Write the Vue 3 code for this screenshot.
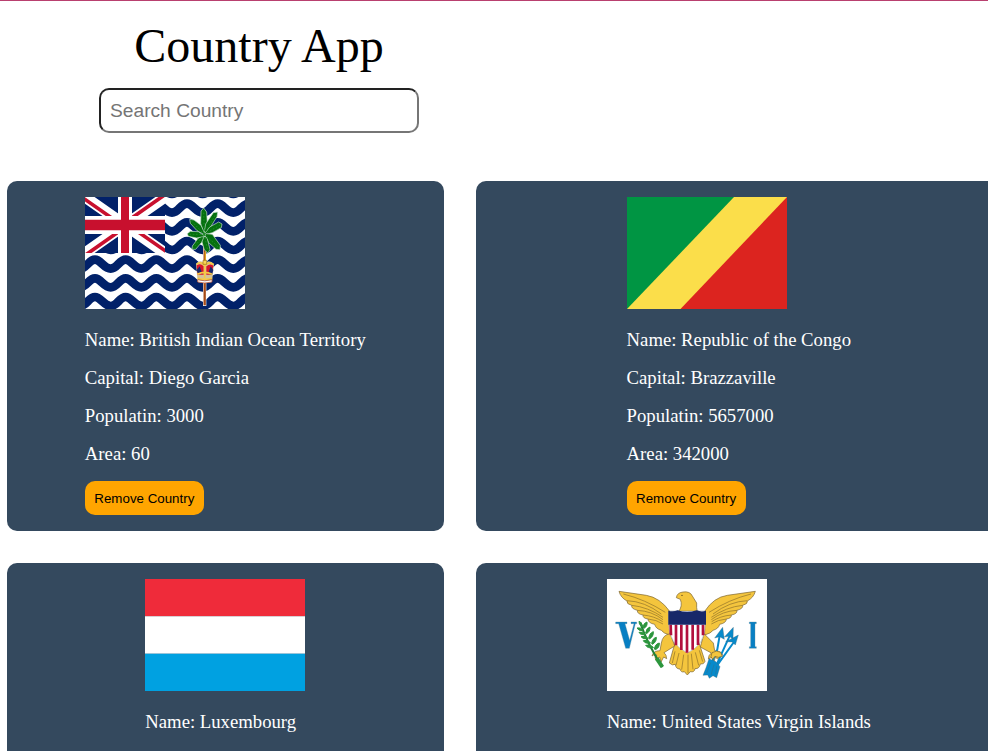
<script setup>
import { ref } from 'vue'

const search = ref('')
const countries = ref([
  { flag: 'io', name: 'British Indian Ocean Territory', capital: 'Diego Garcia', population: 3000, area: 60 },
  { flag: 'cg', name: 'Republic of the Congo', capital: 'Brazzaville', population: 5657000, area: 342000 },
  { flag: 'lu', name: 'Luxembourg' },
  { flag: 'vi', name: 'United States Virgin Islands' },
])

function remove(country) {
  countries.value = countries.value.filter((c) => c !== country)
}

// One horizontal wave: crests every 92 units, 27 units high.
function wave(y) {
  let d = `M-47 ${y}`
  for (let x = -47; x < 500; x += 92) {
    d += `C${x + 17} ${y} ${x + 27} ${y + 27} ${x + 47} ${y + 27}S${x + 73} ${y} ${x + 92} ${y}`
  }
  return d
}
const waves = [-15, 41, 97, 153, 209, 265, 321].map(wave)
</script>

<template>
  <main class="page">
    <header class="header">
      <h1 class="title">Country App</h1>
      <input v-model="search" class="search" type="text" placeholder="Search Country" />
    </header>
    <section class="grid">
      <article v-for="c in countries" :key="c.flag" class="card">
        <div class="content">
          <svg v-if="c.flag === 'io'" class="flag" viewBox="15 21 480 336">
            <path fill="#fff" d="M15 21h480v336H15z" />
            <g fill="none" stroke="#012169" stroke-width="26">
              <path v-for="(d, i) in waves" :key="i" :d="d" />
            </g>
            <svg x="15" y="21" width="240" height="168" viewBox="0 0 240 168">
              <path fill="#012169" d="M0 0h240v168H0z" />
              <path stroke="#fff" stroke-width="33" d="M0 0l240 168M240 0L0 168" />
              <path fill="none" stroke="#c8102e" stroke-width="11" d="M-3 5l123 86M243 163L120 77M237-5L120 77M3 173l117-82" />
              <path stroke="#fff" stroke-width="42" d="M120 0v168" />
              <path stroke="#fff" stroke-width="54" d="M0 84h240" />
              <path stroke="#c8102e" stroke-width="24" d="M120 0v168" />
              <path stroke="#c8102e" stroke-width="32" d="M0 84h240" />
            </svg>
            <path fill="none" stroke="#fff" stroke-width="10" d="M374 164v184" />
            <path fill="none" stroke="#a64b16" stroke-width="7" d="M374 168v178" />
            <path stroke="#e2a51f" stroke-width="4" d="M376 185v38" />
            <g fill="#05700f" stroke="#c9dfd2" stroke-width="2" stroke-linejoin="round">
              <path d="M373 135L362 100 363 63 371 54 380 66 382 100z" />
              <path d="M371 135L377 102 400 68 413 66 411 80 391 112z" />
              <path d="M371 135L389 111 416 96 426 102 424 113 397 128z" />
              <path d="M371 130L397 133 421 166 420 179 408 178 386 158z" />
              <path d="M368 132L382 146 390 178 384 189 373 180 365 152z" />
              <path d="M376 131L365 157 347 178 336 178 337 168 354 145z" />
              <path d="M375 139L350 144 325 139 322 131 331 124 355 125z" />
              <path d="M377 136L351 122 331 100 329 88 342 90 363 106z" />
            </g>
            <path fill="none" stroke="#1d8b25" stroke-width="3" stroke-dasharray="5 5" d="M373 133L371 62M373 133l34-60M373 133l47-28M373 133l43 39M373 133l10 48M373 133l-33 41M373 133h-44M373 133l-38-39" />
            <path fill="#d4c39a" d="M348 221q12-13 26-2 14-12 28 3l-6 54q-23 7-43 0z" />
            <path fill="#d8152a" d="M350 226q11-8 21 3v25h-18zM379 229q11-10 21-2l-5 27h-16z" />
            <path fill="#1b2a6b" d="M350 240l9-11 8 22h-13zM384 251l8-22 8 11-4 14z" />
            <path fill="none" stroke="#f6c942" stroke-width="5" d="M350 223q13-11 24 4 13-15 27-3M374 221v43M352 253q22-12 44 0M353 265q21 6 43 0" />
            <path fill="#fff" stroke="#a43b24" stroke-width="2" d="M353 269q21 7 43 0v7q-22 6-43 0z" />
            <path fill="#f8d657" stroke="#9c711a" stroke-width="2" d="M369 211h11v12h-11z" />
          </svg>
          <svg v-else-if="c.flag === 'cg'" class="flag" viewBox="0 0 160 112">
            <path fill="#009543" d="M0 0h160v112H0z" />
            <path fill="#fbde4a" d="M0 112L107 0h53v112z" />
            <path fill="#dc241f" d="M53.5 112L160 0v112z" />
          </svg>
          <svg v-else-if="c.flag === 'lu'" class="flag" viewBox="0 0 160 112">
            <path fill="#ef2b3a" d="M0 0h160v37.3H0z" />
            <path fill="#fff" d="M0 37.3h160v37.4H0z" />
            <path fill="#00a1e1" d="M0 74.7h160V112H0z" />
          </svg>
          <svg v-else class="flag" viewBox="21 27 480 336">
            <path fill="#fff" d="M21 27h480v336H21z" />
            <g fill="#f4c53d" stroke="#756032" stroke-width="2" stroke-linejoin="round">
              <path d="M209 124Q180 83 139 76L57 64q5 19 24 29-2 9 14 13-2 10 17 15-1 11 17 14-1 10 15 12 0 12 20 16 3 13 20 18 6 9 25 14z" />
              <path d="M314 124q27-42 68-48l84-12q-5 19-24 29 2 9-14 13 2 10-17 15 1 11-17 14 1 10-15 12 0 12-20 16-3 13-20 18-6 9-25 14z" />
              <path d="M235 126q14-18 6-38l-12-5q2-15 20-17 21-3 28 12l13 21q-1 14 2 27z" />
              <path d="M225 218l-17 61q10 9 18 4 1 14 14 14 3 12 13 8l9 10 9-10q12 3 14-9 13 1 16-14 11 2 14-8l-18-56z" />
              <path d="M211 191q-23 3-27 28l-4 23q-20 0-24 16 7-8 15-3-9 6-4 15l12-9 4 15 8-15 9 5q0-12-8-18l32-20zM312 191l28 28 4 23q20 0 24 14-8-6-14-1 8 8 5 16l-13-9-4 13-7-13-10 5q0-12 9-18l-33-18z" />
            </g>
            <path fill="#fff" stroke="#555a6a" d="M206 123h110v38q1 63-54 88-57-29-56-88z" />
            <path fill="none" stroke="#8b6e28" stroke-width="2" d="M70 72q65 16 126 55M81 92q53 2 103 40M95 106q49 5 94 36M112 121q43 2 77 28M129 135q34 3 59 20M144 147q25 2 45 15M453 72q-65 16-126 55M442 92q-53 2-103 40M428 106q-49 5-94 36M411 121q-43 2-77 28M394 135q-34 3-59 20M379 147q-25 2-45 15M225 244l-8 35M237 249l-9 37M251 254l-6 45M264 254v56M274 251l5 47M286 247l10 39M298 241l10 34" />
            <circle cx="246" cy="76" r="2" fill="#49381b" />
            <path fill="none" stroke="#b2103e" stroke-width="8" d="M212 164l1 32M228 164v62M244 164v76M261 164v84M278 164v75M294 164v61M309 164v32" />
            <path fill="#172869" d="M205 122q14 4 28-1 28 9 57 0 15 6 28 1v42H205z" />
            <g fill="none" stroke="#078acb" stroke-width="6"><path d="M360 190l-8 48-24 58M391 193l-49 108M404 213l-59 82" /></g>
            <g fill="#078acb" stroke="#436071">
              <path d="M368 172l5 36-14-8-15 4zM400 172l-1 36-11-9-15 2zM415 195l-9 30-9-9-20-1z" />
              <path d="M327 266l21 9 12 15-10 33-11-6-11 8-5-10-14 1 9-23z" />
            </g>
            <path fill="none" stroke="#45606b" stroke-width="1" d="M332 278l-12 31M342 284l-9 31M350 289l-3 24" />
            <path fill="#f4c53d" stroke="#756032" stroke-width="2" d="M336 248q14-9 26-1l5 12-12 3-10-3-7 9-5-8z" />
            <path fill="none" stroke="#238137" stroke-width="6" d="M121 158q18 58 66 134" />
            <path fill="none" stroke="#2c963d" stroke-width="12" d="M170 265l17 26" />
            <g fill="#2c963d" stroke="#2c963d" stroke-width="3">
              <path d="M124 170q-8-10-7-16 8 2 11 15zM128 182q-13 1-17-8 12-3 18 7zM136 193q-14 4-19-6 12-3 19 5zM143 206q-14 3-20-6 13-5 21 5zM151 219q-16 3-21-7 13-5 21 6zM160 233q-17 3-23-7 14-5 23 6zM130 174q-1-14 11-18 2 13-9 19zM137 189q2-15 13-18 1 14-11 20zM146 205q2-16 14-20 1 15-12 22zM155 221q2-16 14-19 1 14-12 21zM163 237q3-16 15-18 1 15-12 20z" />
            </g>
            <g fill="#087fc3" stroke="#658b98">
              <path d="M47 156h34v5h-6l14 50 13-50h-9v-5h17v5h-4L88 235H77L56 161h-9z" />
              <path d="M448 156h21v5h-4v69h4v5h-21v-5h4v-69h-4z" />
            </g>
          </svg>
          <p class="line">Name: {{ c.name }}</p>
          <template v-if="c.capital">
            <p class="line">Capital: {{ c.capital }}</p>
            <p class="line">Populatin: {{ c.population }}</p>
            <p class="line">Area: {{ c.area }}</p>
            <button class="remove" @click="remove(c)">Remove Country</button>
          </template>
        </div>
      </article>
    </section>
  </main>
</template>

<style>
body { margin: 0; background: #fff; }
</style>

<style scoped>
.page {
  box-sizing: border-box;
  height: 751px;
  overflow: hidden;
  border-top: 1px solid #b9406f;
  font-family: "Liberation Serif", "Times New Roman", serif;
}
.header {
  display: flex;
  flex-direction: column;
  align-items: center;
  width: 320px;
  margin-left: 99px;
  padding-top: 17px;
}
.title {
  margin: 0 0 15px;
  font-size: 48px;
  font-weight: 400;
  line-height: 55px;
}
.search {
  box-sizing: border-box;
  width: 320px;
  height: 45px;
  padding: 8px 9px;
  border: 2px solid;
  border-color: #222 #767676 #767676 #222;
  border-radius: 10px;
  background: #fff;
  font-family: "Liberation Sans", Arial, sans-serif;
  font-size: 19.2px;
  outline: none;
}
.search::placeholder { color: #757575; }
.grid {
  display: grid;
  grid-template-columns: 437px 526px;
  grid-auto-rows: 350px;
  gap: 32px;
  margin: 48px 0 0 6.8px;
}
.card {
  box-sizing: border-box;
  display: flex;
  justify-content: center;
  padding: 16px;
  border-radius: 10px;
  background: #34495e;
  color: #fff;
}
.flag {
  display: block;
  width: 160px;
  height: 112px;
  margin-bottom: 20px;
}
.line {
  margin: 0 0 16px;
  font-size: 18.72px;
  line-height: 22px;
}
.remove {
  display: block;
  width: 119px;
  height: 34px;
  padding: 0;
  border: 0;
  border-radius: 10px;
  background: #ffa500;
  color: #000;
  font-family: "Liberation Sans", Arial, sans-serif;
  font-size: 13.333px;
}
</style>
